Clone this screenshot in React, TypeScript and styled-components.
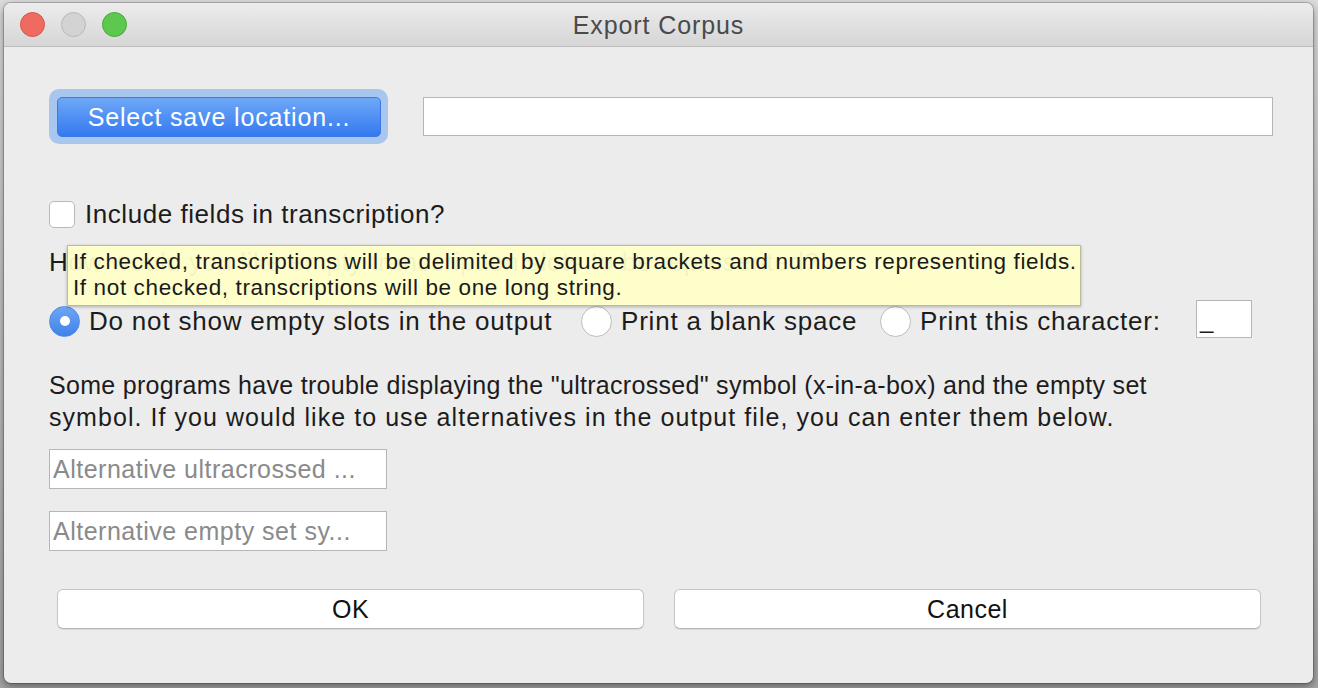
import React from "react";
import styled, { createGlobalStyle } from "styled-components";

const Global = createGlobalStyle`
  html, body { margin: 0; padding: 0; }
  body {
    width: 1318px;
    height: 688px;
    overflow: hidden;
    background: linear-gradient(#dcdcdc, #a4a4a4);
    font-family: "Liberation Sans", Arial, sans-serif;
  }
`;

const Window = styled.div`
  position: relative;
  margin: 3px 0 0 4px;
  width: 1309px;
  height: 680px;
  background: #ececec;
  border-radius: 7px;
  box-shadow: 0 0 0 1px rgba(0, 0, 0, 0.18), 0 3px 9px rgba(0, 0, 0, 0.45);
  overflow: hidden;
  display: flex;
  flex-direction: column;
`;

const TitleBar = styled.div`
  position: relative;
  height: 44px;
  flex: none;
  display: flex;
  align-items: center;
  padding-left: 16px;
  gap: 16px;
  background: linear-gradient(#ececec, #d6d6d6);
  border-bottom: 1px solid #bdbdbd;
  box-sizing: border-box;
`;

const Light = styled.span<{ $fill: string; $edge: string }>`
  width: 23px;
  height: 23px;
  border-radius: 50%;
  background: ${(p) => p.$fill};
  border: 1px solid ${(p) => p.$edge};
`;

const Title = styled.div`
  position: absolute;
  left: 0;
  right: 0;
  top: 2px;
  bottom: 0;
  display: flex;
  align-items: center;
  justify-content: center;
  font-size: 25px;
  letter-spacing: 0.9px;
  color: #4a4a4a;
  pointer-events: none;
`;

const Content = styled.div`
  position: relative;
  display: flex;
  flex-direction: column;
  padding: 42px 0 0 45px;
  color: #1c1c1c;
  font-size: 26px;
  letter-spacing: 0.55px;
`;

const SaveRow = styled.div`
  display: flex;
  align-items: center;
  gap: 35px;
`;

const FocusRing = styled.div`
  padding: 8px 7px 7px 8px;
  border-radius: 10px;
  background: #a9c6ef;
`;

const BlueButton = styled.button`
  width: 324px;
  height: 40px;
  border: 1px solid #3a79e6;
  border-radius: 5px;
  background: linear-gradient(#6ea8f6, #3479f0);
  color: #fff;
  font-family: inherit;
  font-size: 25px;
  letter-spacing: 0.85px;
  padding: 0;
`;

const PathField = styled.div`
  width: 848px;
  height: 37px;
  background: #fff;
  border: 1px solid #b6b6b6;
`;

const CheckRow = styled.label`
  display: flex;
  align-items: center;
  gap: 10px;
  margin-top: 56px;
  height: 28px;
`;

const CheckBox = styled.span`
  width: 24px;
  height: 25px;
  border: 1px solid #b9b9b9;
  border-radius: 5px;
  background: #fff;
`;

const Heading = styled.div`
  margin-top: 18px;
  height: 32px;
  line-height: 32px;
  white-space: nowrap;
`;

const Tooltip = styled.div`
  position: absolute;
  left: 63px;
  top: 198px;
  width: 1003px;
  padding: 3px 4px 4px 5px;
  background: rgba(255, 255, 200, 0.95);
  border: 1px solid #bcbc9c;
  box-shadow: 0 1px 3px rgba(0, 0, 0, 0.25);
  font-size: 22.5px;
  letter-spacing: 0.62px;
  line-height: 26px;
  color: #1a1a1a;
  white-space: nowrap;
`;

const RadioRow = styled.div`
  display: flex;
  align-items: center;
  margin-top: 22px;
  height: 42px;
`;

const Option = styled.label<{ $w: number }>`
  display: flex;
  align-items: center;
  gap: 9px;
  width: ${(p) => p.$w}px;
  flex: none;
  letter-spacing: 0.8px;
`;

const Radio = styled.span<{ $on?: boolean }>`
  width: 29px;
  height: 29px;
  border-radius: 50%;
  flex: none;
  display: flex;
  align-items: center;
  justify-content: center;
  border: 1px solid ${(p) => (p.$on ? "#4a8be8" : "#bdbdbd")};
  background: ${(p) => (p.$on ? "linear-gradient(#6ea6f4, #3f82ea)" : "#fff")};
  &::after {
    content: "";
    display: ${(p) => (p.$on ? "block" : "none")};
    width: 10px;
    height: 10px;
    border-radius: 50%;
    background: #fff;
  }
`;

const CharField = styled.div`
  width: 56px;
  height: 38px;
  margin-top: -4px;
  background: #fff;
  border: 1px solid #b6b6b6;
  display: flex;
  align-items: flex-end;
  padding-left: 3px;
  box-sizing: border-box;
  font-size: 24px;
  line-height: 34px;
`;

const Paragraph = styled.div`
  margin: 27px 0 0 0;
  line-height: 32px;
  font-size: 25px;
  display: flex;
  flex-direction: column;
`;

const ParaLine = styled.span<{ $spacing: number }>`
  letter-spacing: ${(p) => p.$spacing}px;
  white-space: nowrap;
`;

const AltField = styled.input<{ $gap: number }>`
  width: 338px;
  height: 40px;
  box-sizing: border-box;
  border: 1px solid #b6b6b6;
  background: #fff;
  padding: 0 0 0 3px;
  font-family: inherit;
  font-size: 25px;
  letter-spacing: 0.5px;
  outline: none;
  margin-top: ${(p) => p.$gap}px;
  &::placeholder {
    color: #8a8a8a;
  }
`;

const ButtonRow = styled.div`
  display: flex;
  gap: 30px;
  width: 1204px;
  margin: 38px 0 0 8px;
`;

const PlainButton = styled.button`
  flex: 1;
  height: 40px;
  background: #fff;
  border: 1px solid #c6c6c6;
  border-bottom-color: #b4b4b4;
  border-radius: 6px;
  box-shadow: 0 1px 1px rgba(0, 0, 0, 0.08);
  font-family: inherit;
  font-size: 25px;
  letter-spacing: 0.5px;
  color: #111;
  padding: 0;
`;

export default function App() {
  return (
    <>
      <Global />
      <Window>
        <TitleBar>
          <Light $fill="#ef6a60" $edge="#d9544b" />
          <Light $fill="#d3d3d3" $edge="#b9b9b9" />
          <Light $fill="#5cc84e" $edge="#47a93b" />
          <Title>Export Corpus</Title>
        </TitleBar>
        <Content>
          <SaveRow>
            <FocusRing>
              <BlueButton>Select save location...</BlueButton>
            </FocusRing>
            <PathField />
          </SaveRow>
          <CheckRow>
            <CheckBox />
            <span>Include fields in transcription?</span>
          </CheckRow>
          <Heading>How would you like empty transcription slots to be represented?</Heading>
          <Tooltip>
            If checked, transcriptions will be delimited by square brackets and numbers representing fields.
            <br />
            If not checked, transcriptions will be one long string.
          </Tooltip>
          <RadioRow>
            <Option $w={532}>
              <Radio $on />
              <span>Do not show empty slots in the output</span>
            </Option>
            <Option $w={299}>
              <Radio />
              <span>Print a blank space</span>
            </Option>
            <Option $w={316}>
              <Radio />
              <span>Print this character:</span>
            </Option>
            <CharField>_</CharField>
          </RadioRow>
          <Paragraph>
            <ParaLine $spacing={0.3}>
              Some programs have trouble displaying the "ultracrossed" symbol (x-in-a-box) and the empty set
            </ParaLine>
            <ParaLine $spacing={1.05}>
              symbol. If you would like to use alternatives in the output file, you can enter them below.
            </ParaLine>
          </Paragraph>
          <AltField $gap={16} placeholder="Alternative ultracrossed ..." />
          <AltField $gap={22} placeholder="Alternative empty set sy..." />
          <ButtonRow>
            <PlainButton>OK</PlainButton>
            <PlainButton>Cancel</PlainButton>
          </ButtonRow>
        </Content>
      </Window>
    </>
  );
}
